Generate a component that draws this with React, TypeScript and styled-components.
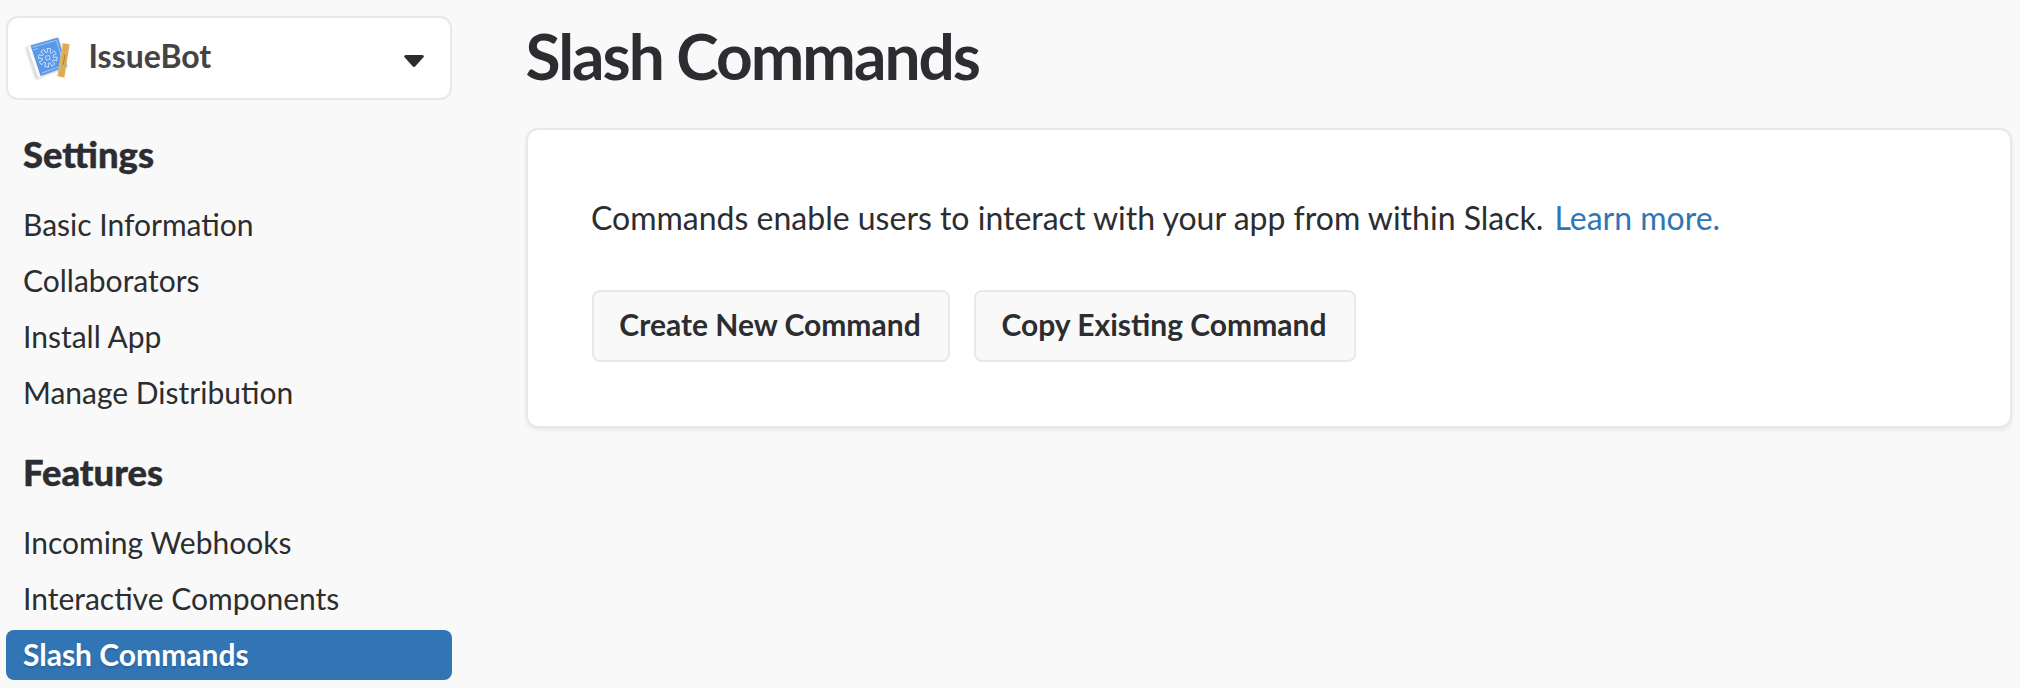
import React from "react";
import styled, { createGlobalStyle } from "styled-components";

const GlobalStyle = createGlobalStyle`
  * { box-sizing: border-box; }
  body {
    margin: 0;
    background: #f9f9f9;
    color: #2c2d30;
    font-family: Lato, "Liberation Sans", sans-serif;
    -webkit-font-smoothing: antialiased;
  }
`;

const Page = styled.div`
  display: flex;
  align-items: flex-start;
  height: 688px;
  overflow: hidden;
  padding: 16px 8px 0 6px;
`;

const Sidebar = styled.aside`
  flex: none;
  width: 446px;
  margin-right: 74px;
`;

const AppPicker = styled.button`
  display: flex;
  align-items: center;
  width: 100%;
  height: 84px;
  padding: 0 26px 0 17px;
  border: 2px solid #e8e8e8;
  border-radius: 12px;
  background: #fff;
  color: #444;
  font: 700 32px/40px Lato, sans-serif;
  text-align: left;
`;

const AppName = styled.span`
  flex: 1;
  margin: 0 0 5px 15.5px;
`;

const NavHeading = styled.h2`
  margin: 0;
  padding-left: 17px;
  font-size: 36.4px;
  font-weight: 900;
  line-height: 44px;
  -webkit-text-stroke: 0.4px currentColor;
`;

const NavGroup = styled.nav`
  padding-top: 32px;
`;

const NavList = styled.ul`
  display: flex;
  flex-direction: column;
  gap: 6px;
  margin: 24px 0 0;
  padding: 0;
  list-style: none;
`;

const NavItem = styled.li<{ $active?: boolean }>`
  height: 50px;
  padding-left: 17px;
  border-radius: 8px;
  font-size: 30px;
  line-height: 48px;
  font-weight: ${(p) => (p.$active ? 700 : 400)};
  color: ${(p) => (p.$active ? "#fff" : "inherit")};
  background: ${(p) => (p.$active ? "#3175b5" : "transparent")};
  text-shadow: ${(p) => (p.$active ? "0 2px 2px rgba(0, 0, 0, 0.15)" : "none")};
`;

const Main = styled.main`
  flex: 1;
  min-width: 0;
`;

const Title = styled.h1`
  margin: 0 0 32px -0.5px;
  font-size: 64px;
  line-height: 80px;
  font-weight: 700;
  letter-spacing: -2px;
`;

const Card = styled.section`
  height: 300px;
  padding: 64px;
  border: 2px solid #e8e8e8;
  border-radius: 12px;
  background: #fff;
  box-shadow: 0 2px 4px rgba(0, 0, 0, 0.08);
`;

const Intro = styled.p`
  margin: 0 0 48px -1px;
  font-size: 32px;
  line-height: 48px;
`;

const Link = styled.a`
  margin-left: 3px;
  color: #3175b5;
`;

const Actions = styled.div`
  display: flex;
  gap: 24px;
`;

const Button = styled.button<{ $width: number }>`
  width: ${(p) => p.$width}px;
  height: 72px;
  padding: 0 2px 4px 0;
  border: 2px solid #e8e8e8;
  border-radius: 8px;
  background: #f9f9f9;
  color: #2c2d30;
  font: 700 30px/40px Lato, sans-serif;
  white-space: nowrap;
`;

const CaretIcon = styled.svg`
  margin-top: 6px;
`;

const gearPoints = Array.from({ length: 8 }, (_, tooth) =>
  [
    [-13, 5.6],
    [-12, 9.4],
    [12, 9.4],
    [13, 5.6],
  ].map(([offset, radius]) => {
    const angle = ((tooth * 45 + 8 + offset) * Math.PI) / 180;
    return `${(radius * Math.cos(angle)).toFixed(2)},${(radius * Math.sin(angle)).toFixed(2)}`;
  })
)
  .flat()
  .join(" ");

const BlueprintIcon = () => (
  <svg width="48" height="48" viewBox="0 -1.5 48 48" aria-hidden="true">
    <defs>
      <filter id="soft" x="-20%" y="-20%" width="140%" height="140%">
        <feDropShadow dx="0" dy="0.6" stdDeviation="1" floodOpacity="0.3" />
      </filter>
    </defs>
    <g filter="url(#soft)">
      <path d="M1 12 5 10 16 41 11 43Z" fill="#dedede" />
      <path d="M2.5 11.4 6 10 17 40.6 13.4 42Z" fill="#fafafa" />
      <path d="M5.5 10 33 2 42 31 15.5 40.5Z" fill="#5c98e8" />
    </g>
    <g fill="none" stroke="#b4d1f8" strokeWidth="0.8" strokeLinejoin="round">
      <path d="M7.5 11.8 31.5 4.8 39 29.5 17 37.5" />
      <path d="M8 14.5 13 13" />
      <g transform="translate(22.8 22.3)" stroke="#cde1fb">
        <polygon points={gearPoints} strokeWidth="1" />
        <rect x="-2" y="-2" width="4" height="4" transform="rotate(-12)" />
      </g>
    </g>
    <g transform="rotate(9 38 25)">
      <rect x="35" y="8" width="7" height="33.5" fill="#dbab55" />
      <path d="M35.5 8v33" stroke="#e8bf73" strokeWidth="0.9" />
      <path d="M39 19v10" stroke="#a97d35" strokeWidth="0.9" />
    </g>
  </svg>
);

const Caret = () => (
  <CaretIcon width="20" height="12" viewBox="0 0 20 12" aria-hidden="true">
    <path d="M1.8 0H18.2Q21 .5 19.2 2.6L11.4 11.2Q10 12.6 8.6 11.2L.8 2.6Q-1 .5 1.8 0Z" fill="#2c2d30" />
  </CaretIcon>
);

const groups = [
  {
    title: "Settings",
    items: ["Basic Information", "Collaborators", "Install App", "Manage Distribution"],
  },
  {
    title: "Features",
    items: ["Incoming Webhooks", "Interactive Components", "Slash Commands"],
  },
];

export default function App() {
  return (
    <>
      <GlobalStyle />
      <Page>
        <Sidebar>
          <AppPicker>
            <BlueprintIcon />
            <AppName>IssueBot</AppName>
            <Caret />
          </AppPicker>
          {groups.map((group) => (
            <NavGroup key={group.title}>
              <NavHeading>{group.title}</NavHeading>
              <NavList>
                {group.items.map((item) => (
                  <NavItem key={item} $active={item === "Slash Commands"}>
                    {item}
                  </NavItem>
                ))}
              </NavList>
            </NavGroup>
          ))}
        </Sidebar>
        <Main>
          <Title>Slash Commands</Title>
          <Card>
            <Intro>
              Commands enable users to interact with your app from within Slack. <Link>Learn more.</Link>
            </Intro>
            <Actions>
              <Button $width={358}>Create New Command</Button>
              <Button $width={382}>Copy Existing Command</Button>
            </Actions>
          </Card>
        </Main>
      </Page>
    </>
  );
}
